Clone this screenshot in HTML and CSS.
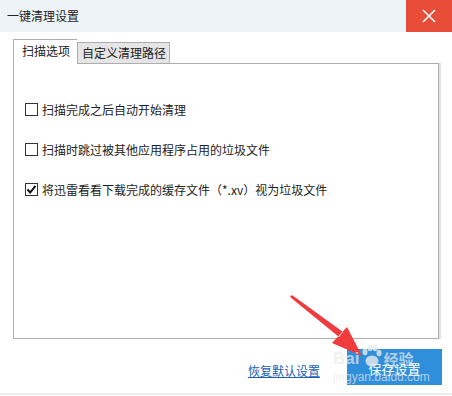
FILE: index.html
```html
<!DOCTYPE html>
<html>
<head>
<meta charset="utf-8">
<link rel="stylesheet" href="styles.css">
</head>
<body>
<div class="win">
  <div class="titlebar">
    <div class="title">一键清理设置</div>
    <div class="close">
      <svg width="16" height="16" viewBox="0 0 16 16"><path d="M2 2 L14 14 M14 2 L2 14" stroke="#fff" stroke-width="1.6" fill="none"/></svg>
    </div>
  </div>
  <div class="body">
    <div class="tabs">
      <div class="tab active">扫描选项</div>
      <div class="tab">自定义清理路径</div>
    </div>
    <div class="panel">
      <label class="row"><span class="cb"></span><span>扫描完成之后自动开始清理</span></label>
      <label class="row"><span class="cb"></span><span>扫描时跳过被其他应用程序占用的垃圾文件</span></label>
      <label class="row"><span class="cb checked"><svg width="11" height="11" viewBox="0 0 11 11"><path d="M1.5 5.5 L4.2 8.5 L9.5 1.8" stroke="#111" stroke-width="2" fill="none"/></svg></span><span>将迅雷看看下载完成的缓存文件（*.xv）视为垃圾文件</span></label>
    </div>
    <div class="footer">
      <a class="link">恢复默认设置</a>
      <div class="btn">保存设置</div>
    </div>
  </div>
  <div class="bottomline"></div>
  <svg class="arrow" width="80" height="70" viewBox="0 0 80 70">
    <path d="M2 1 L53 38 L49 43 L0 3 Z M42 49 L72 62 L57 33 Z" fill="#f03c3c"/>
  </svg>
  <div class="wm">
    <div class="wm1"><span>Bai</span><svg class="paw" width="22" height="24" viewBox="0 0 22 24"><g fill="rgba(235,235,235,0.8)"><ellipse cx="5" cy="8" rx="2.5" ry="3.2"/><ellipse cx="10" cy="4" rx="2.5" ry="3.2"/><ellipse cx="15" cy="4" rx="2.5" ry="3.2"/><ellipse cx="19" cy="9" rx="2.5" ry="3.2"/><ellipse cx="12" cy="17" rx="6.5" ry="5.5"/></g></svg><span class="cn">经验</span></div>
    <div class="wm2">jingyan.baidu.com</div>
  </div>
</div>
</body>
</html>
```
FILE: styles.css
```css
* { box-sizing: border-box; }
html, body { margin: 0; padding: 0; background: #fff; }
body {
  font-family: "Noto Sans CJK SC", "Microsoft YaHei", sans-serif;
  font-size: 12px;
  color: #222;
}
.win { position: relative; width: 452px; height: 396px; overflow: hidden; }
.titlebar {
  height: 32px;
  background: #eef3f8;
  display: flex;
  align-items: center;
  justify-content: space-between;
}
.title { padding-left: 7px; font-size: 12px; color: #222; line-height: 32px; }
.close {
  width: 46px; height: 32px;
  background: #e84d39;
  display: flex; align-items: center; justify-content: center;
}
.body { padding: 7px 13px 0 13px; }
.tabs { display: flex; align-items: flex-end; height: 24px; }
.tab {
  height: 21px;
  border: 1px solid #adadad;
  border-bottom: none;
  background: #e5e5e5;
  padding: 0 3px 0 4px;
  line-height: 20px;
  color: #222;
}
.tab.active {
  background: #fff;
  border-right: none;
  padding: 0 7px 0 8px;
  line-height: 21px;
  position: relative;
  z-index: 1;
  margin-bottom: -1px;
  height: 25px;
}
.panel {
  width: 426px;
  height: 276px;
  border: 1px solid #adadad;
  box-shadow: 2px 0 0 #e3e3e3;
  padding-top: 36px;
  padding-left: 11px;
  display: flex;
  flex-direction: column;
  gap: 22px;
}
.row { display: flex; align-items: center; height: 18px; gap: 4px; }
.cb {
  width: 13px; height: 13px;
  border: 1px solid #333;
  background: #fff;
  display: flex; align-items: center; justify-content: center;
}
.footer {
  display: flex;
  align-items: center;
  justify-content: flex-end;
  margin-top: 10px;
  margin-right: -3px;
  gap: 27px;
}
.link { color: #1a5fb4; text-decoration: underline; font-size: 12px; margin-top: 6px; }
.btn {
  width: 95px; height: 36px;
  background: #2f8fdb;
  color: #fff;
  display: flex; align-items: center; justify-content: center;
  font-size: 13px;
  padding-top: 2px;
}
.bottomline {
  position: absolute; left: 0; right: 0; bottom: 1px; height: 2px; background: #ececec;
}
.arrow { position: absolute; left: 290px; top: 294px; }
.wm {
  position: absolute; left: 333px; top: 343px;
  color: rgba(235, 235, 235, 0.7);
  pointer-events: none;
}
.wm1 { display: flex; align-items: flex-end; height: 25px; font-family: "Liberation Sans", sans-serif; font-size: 17px; font-weight: bold; line-height: 18px; }
.wm1 .cn { font-family: "Noto Sans CJK SC", sans-serif; font-size: 15px; line-height: 18px; }
.paw { margin: 0 1px 0 1px; }
.wm2 { font-family: "Liberation Sans", sans-serif; font-size: 12px; line-height: 13px; margin-top: 3px; }
```
